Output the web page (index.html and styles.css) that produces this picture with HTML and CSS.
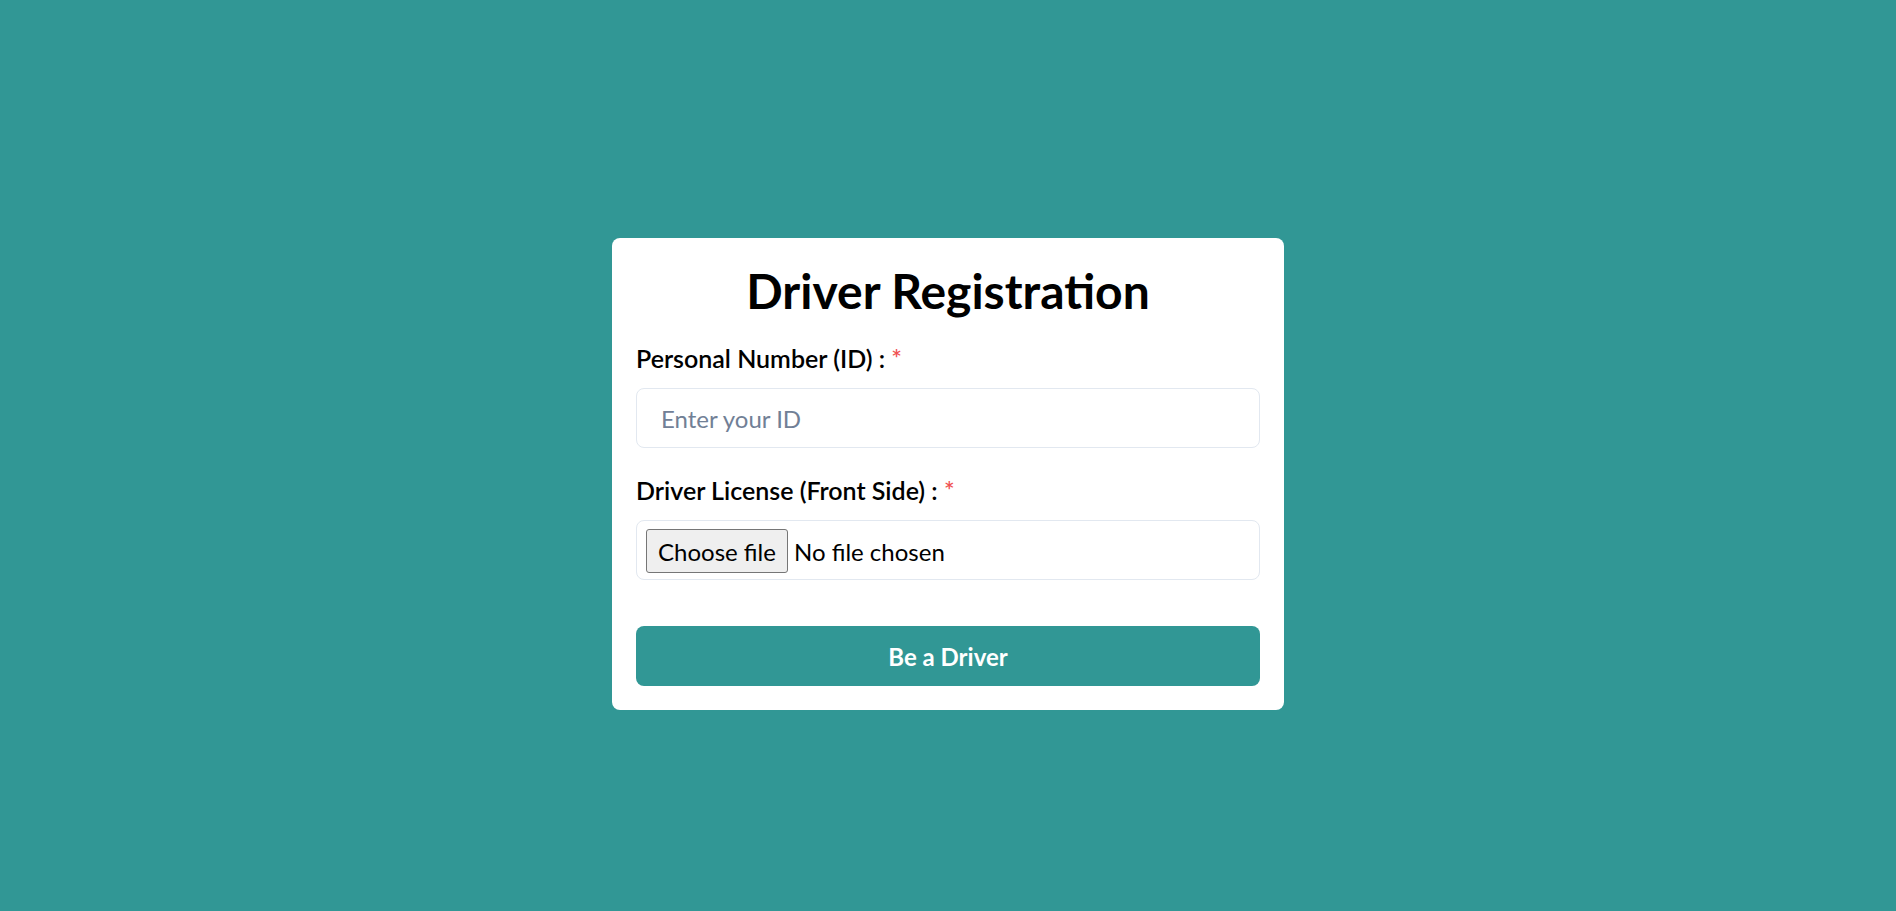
FILE: index.html
```html
<!DOCTYPE html>
<html lang="en">
<head>
<meta charset="utf-8">
<title>Driver Registration</title>
<link rel="stylesheet" href="styles.css">
</head>
<body>
<main class="page">
  <form class="card">
    <h1 class="title">Driver Registration</h1>
    <div class="field">
      <label class="label" for="pid">Personal Number (ID) : <span class="req">*</span></label>
      <input class="input" id="pid" type="text" placeholder="Enter your ID">
    </div>
    <div class="field">
      <label class="label" for="lic">Driver License (Front Side) : <span class="req">*</span></label>
      <div class="file-field">
        <label class="file-btn" for="lic">Choose file</label>
        <span class="file-name">No file chosen</span>
        <input class="file-hidden" id="lic" type="file">
      </div>
    </div>
    <button class="submit" type="button">Be a Driver</button>
  </form>
</main>
</body>
</html>
```
FILE: styles.css
```css
* { box-sizing: border-box; }
html, body { margin: 0; padding: 0; }
body {
  background: #319795;
  font-family: "Lato", "Open Sans", sans-serif;
  color: #000;
}
.page {
  height: 100vh;
  padding-top: 37px;
  display: flex;
  align-items: center;
  justify-content: center;
}
.card {
  width: 672px;
  background: #fff;
  border-radius: 8px;
  padding: 24px;
  display: flex;
  flex-direction: column;
}
.title {
  margin: 0 0 22px;
  font-size: 48px;
  line-height: 58px;
  font-weight: 700;
  text-align: center;
}
.field {
  display: flex;
  flex-direction: column;
  margin-bottom: 26px;
}
.field:last-of-type { margin-bottom: 46px; }
.label {
  display: block;
  font-size: 25px;
  line-height: 32px;
  font-weight: 600;
  margin-bottom: 14px;
}
.req { color: #f05252; }
.input {
  height: 60px;
  border: 1px solid #e2e8f0;
  border-radius: 8px;
  padding: 0 24px;
  font-family: inherit;
  font-size: 24px;
  color: #000;
  outline: none;
}
.input::placeholder { color: #718096; }
.file-field {
  height: 60px;
  border: 1px solid #e2e8f0;
  border-radius: 8px;
  padding: 1px 9px 0;
  display: flex;
  align-items: center;
  font-size: 24px;
}
.file-btn {
  height: 44px;
  padding: 2px 11px 0;
  display: flex;
  align-items: center;
  background: #efefef;
  border: 1px solid #767676;
  border-radius: 3px;
  margin-right: 6px;
  color: #000;
}
.file-name { color: #000; padding-top: 2px; }
.file-hidden { display: none; }
.submit {
  height: 60px;
  border: none;
  border-radius: 8px;
  background: #319795;
  color: #fff;
  font-family: inherit;
  font-size: 24px;
  font-weight: 700;
  cursor: pointer;
}
```
